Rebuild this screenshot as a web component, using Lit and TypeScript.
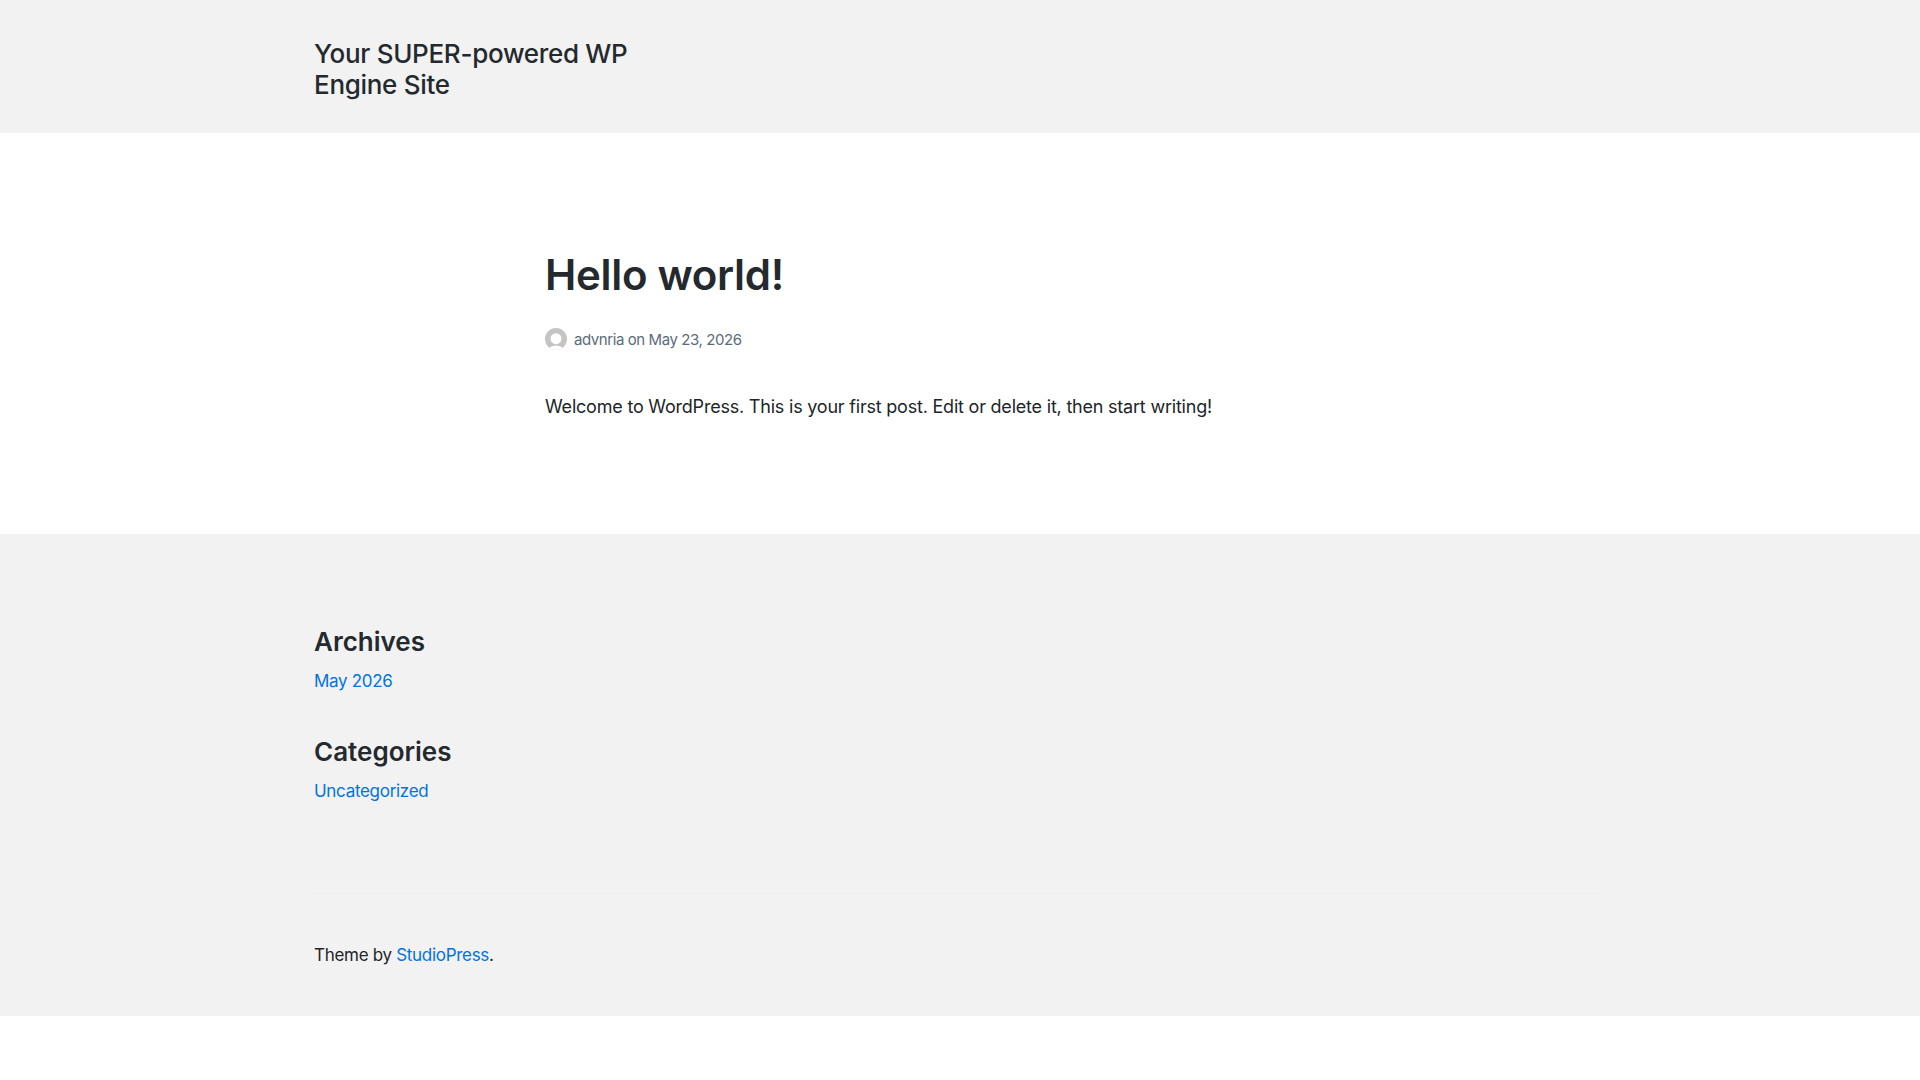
import { LitElement, html, css } from "lit";
import { customElement } from "lit/decorators.js";

@customElement("app-root")
export class AppRoot extends LitElement {
  static styles = css`
    :host { display: block; font-family: "Inter", "Liberation Sans", sans-serif; color: #212529; background: #fff; min-height: 1080px; font-size: 17px; }
    a { color: #0073e6; text-decoration: none; }
    .container { width: 1292px; margin: 0 auto; }
    header { background: #f2f2f2; height: 133px; padding-top: 38px; box-sizing: border-box; }
    .site-title { margin: 0; width: 340px; font-size: 26px; line-height: 31px; font-weight: 550; letter-spacing: -0.3px; color: #24292e; }
    main { height: 401px; box-sizing: border-box; padding-top: 116px; }
    .article { margin-left: 231px; }
    h1 { margin: 0; font-size: 42px; line-height: 52px; font-weight: 600; letter-spacing: -0.3px; color: #24292e; }
    .meta { display: flex; align-items: center; gap: 7px; margin-top: 27px; height: 22px; font-size: 15px; letter-spacing: -0.42px; color: #5c6b7a; }
    .meta svg { width: 22px; height: 22px; display: block; }
    .post { margin: 43px 0 0; font-size: 18px; line-height: 27px; letter-spacing: -0.21px; }
    footer { background: #f2f2f2; height: 482px; box-sizing: border-box; padding-top: 91px; }
    .widget h2 { margin: 0; font-size: 26px; line-height: 34px; font-weight: 600; color: #24292e; }
    .widget { margin-bottom: 40px; }
    .widget a { display: block; margin-top: 9px; font-size: 17px; line-height: 27px; letter-spacing: -0.3px; }
    hr { border: 0; border-top: 1px dotted #f9f9f9; margin: 85px 0 0; }
    .credit { margin-top: 51px; font-size: 17px; line-height: 27px; letter-spacing: -0.3px; }
  `;
  render() {
    return html`
      <header><div class="container"><p class="site-title">Your SUPER-powered WP Engine Site</p></div></header>
      <main><div class="container"><div class="article">
        <h1>Hello world!</h1>
        <div class="meta">
          <svg viewBox="0 0 22 22"><defs><clipPath id="c"><circle cx="11" cy="11" r="11"/></clipPath></defs><g clip-path="url(#c)"><rect width="22" height="22" fill="#c4c4c4"/><circle cx="11" cy="10.7" r="5.5" fill="#fff"/><ellipse cx="11" cy="23" rx="8" ry="5.5" fill="#fff"/></g></svg>
          <span>advnria on May 23, 2026</span>
        </div>
        <p class="post">Welcome to WordPress. This is your first post. Edit or delete it, then start writing!</p>
      </div></div></main>
      <footer><div class="container">
        <div class="widget"><h2>Archives</h2><a href="#">May 2026</a></div>
        <div class="widget"><h2>Categories</h2><a href="#">Uncategorized</a></div>
        <hr />
        <div class="credit">Theme by <a href="#">StudioPress</a>.</div>
      </div></footer>
    `;
  }
}
